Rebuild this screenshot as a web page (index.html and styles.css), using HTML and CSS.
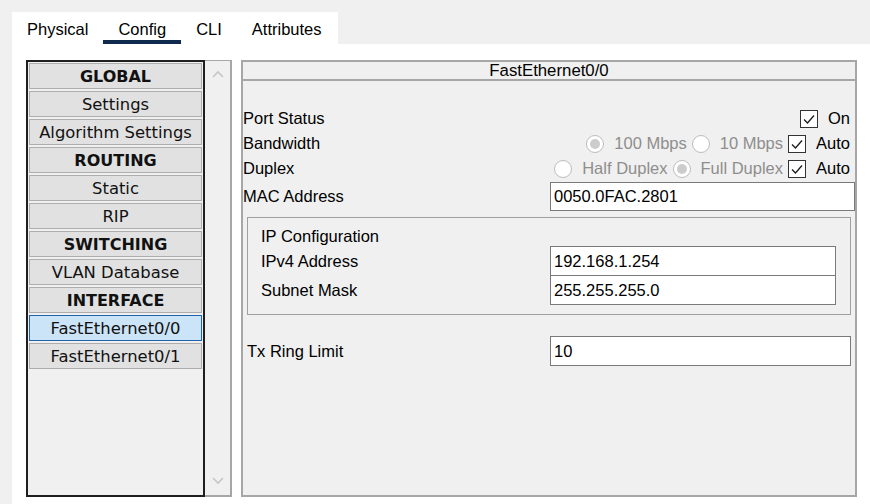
FILE: index.html
```html
<!DOCTYPE html>
<html>
<head>
<meta charset="utf-8">
<link rel="stylesheet" href="styles.css">
</head>
<body>
<div class="app">
  <div class="tabs">
    <div class="tab">Physical</div>
    <div class="tab active">Config</div>
    <div class="tab">CLI</div>
    <div class="tab">Attributes</div>
  </div>
  <div class="content">
    <div class="nav">
      <div class="list">
        <div class="item head">GLOBAL</div>
        <div class="item">Settings</div>
        <div class="item">Algorithm Settings</div>
        <div class="item head">ROUTING</div>
        <div class="item">Static</div>
        <div class="item">RIP</div>
        <div class="item head">SWITCHING</div>
        <div class="item">VLAN Database</div>
        <div class="item head">INTERFACE</div>
        <div class="item selected">FastEthernet0/0</div>
        <div class="item">FastEthernet0/1</div>
      </div>
      <div class="scrollbar">
        <svg width="12" height="8" viewBox="0 0 12 8"><path d="M1 7 L6 2 L11 7" stroke="#c6c6c6" stroke-width="1.6" fill="none"/></svg>
        <svg width="12" height="8" viewBox="0 0 12 8"><path d="M1 1 L6 6 L11 1" stroke="#c6c6c6" stroke-width="1.6" fill="none"/></svg>
      </div>
    </div>
    <div class="panel">
      <div class="panel-title">FastEthernet0/0</div>
      <div class="panel-body">
        <div class="row">
          <span class="label">Port Status</span>
          <div class="controls">
            <span class="opt"><span class="check"><svg width="16" height="16" viewBox="0 0 16 16"><path d="M3 8.5 L6.5 12 L13 4.5" stroke="#1a1a1a" stroke-width="1.3" fill="none"/></svg></span><span>On</span></span>
          </div>
        </div>
        <div class="row">
          <span class="label">Bandwidth</span>
          <div class="controls">
            <span class="opt dis"><span class="radio on"></span><span>100 Mbps</span></span>
            <span class="opt dis"><span class="radio"></span><span>10 Mbps</span></span>
            <span class="opt"><span class="check"><svg width="16" height="16" viewBox="0 0 16 16"><path d="M3 8.5 L6.5 12 L13 4.5" stroke="#1a1a1a" stroke-width="1.3" fill="none"/></svg></span><span>Auto</span></span>
          </div>
        </div>
        <div class="row">
          <span class="label">Duplex</span>
          <div class="controls">
            <span class="opt dis"><span class="radio"></span><span>Half Duplex</span></span>
            <span class="opt dis"><span class="radio on"></span><span>Full Duplex</span></span>
            <span class="opt"><span class="check"><svg width="16" height="16" viewBox="0 0 16 16"><path d="M3 8.5 L6.5 12 L13 4.5" stroke="#1a1a1a" stroke-width="1.3" fill="none"/></svg></span><span>Auto</span></span>
          </div>
        </div>
        <div class="row mac">
          <span class="label">MAC Address</span>
          <div class="field">0050.0FAC.2801</div>
        </div>
        <div class="group">
          <div class="group-title">IP Configuration</div>
          <div class="grow">
            <span class="glabel">IPv4 Address</span>
            <div class="field">192.168.1.254</div>
          </div>
          <div class="grow second">
            <span class="glabel">Subnet Mask</span>
            <div class="field">255.255.255.0</div>
          </div>
        </div>
        <div class="row tx">
          <span class="txlabel">Tx Ring Limit</span>
          <div class="field">10</div>
        </div>
      </div>
    </div>
  </div>
</div>
</body>
</html>
```
FILE: styles.css
```css
body {
  margin: 0;
  background: #f0f0f0;
  font-family: "Liberation Sans", Arial, sans-serif;
  font-size: 16.5px;
  color: #000;
}
.app {
  height: 504px;
  box-sizing: border-box;
  padding: 12px 0 0 12px;
  display: flex;
  flex-direction: column;
}
.tabs {
  display: flex;
  width: 326px;
  height: 32px;
  background: #fff;
}
.tab {
  padding: 6px 15px 0;
  border-bottom: 4px solid transparent;
  display: flex;
  align-items: center;
  font-size: 16.5px;
}
.tab.active {
  border-bottom-color: #0f2a4d;
}
.content {
  flex: 1;
  background: #fff;
  display: flex;
  gap: 9px;
  padding: 16px 13px 7px 14px;
}
.nav {
  display: flex;
}
.list {
  width: 179px;
  box-sizing: border-box;
  border: 2px solid #1f1f1f;
  padding: 1px;
  background: #f0f0f0;
  display: flex;
  flex-direction: column;
  gap: 2px;
}
.item {
  height: 26px;
  box-sizing: border-box;
  border: 1px solid #adadad;
  background: #e1e1e1;
  font-family: "DejaVu Sans", Verdana, sans-serif;
  font-size: 16.4px;
  display: flex;
  align-items: center;
  justify-content: center;
  color: #111;
  white-space: nowrap;
}
.item.head {
  font-weight: bold;
  font-size: 16px;
}
.item.selected {
  background: #cce4f7;
  border-color: #1e64a8;
}
.scrollbar {
  width: 27px;
  box-sizing: border-box;
  background: #f0f0f0;
  border-top: 1px solid #a6a6a6;
  border-right: 2px solid #a6a6a6;
  border-bottom: 2px solid #a6a6a6;
  display: flex;
  flex-direction: column;
  justify-content: space-between;
  align-items: center;
  padding: 9px 0 10px;
}
.panel {
  width: 616px;
  box-sizing: border-box;
  border: 2px solid #a6a6a6;
  background: #f0f0f0;
  display: flex;
  flex-direction: column;
}
.panel-title {
  height: 17px;
  line-height: 18px;
  text-align: center;
  border-bottom: 2px solid #a6a6a6;
  font-size: 16.8px;
}
.panel-body {
  padding-top: 25px;
  display: flex;
  flex-direction: column;
}
.row {
  display: flex;
  align-items: center;
  height: 25px;
}
.label {
  width: 307px;
  flex: none;
}
.controls {
  margin-left: auto;
  margin-right: 5px;
  display: flex;
  align-items: center;
  gap: 5px;
}
.opt {
  display: flex;
  align-items: center;
  gap: 10px;
}
.opt.dis {
  color: #8e8e8e;
}
.check {
  width: 18px;
  height: 18px;
  box-sizing: border-box;
  border: 1px solid #333;
  background: #fff;
  display: flex;
  align-items: center;
  justify-content: center;
}
.radio {
  width: 18px;
  height: 18px;
  box-sizing: border-box;
  border-radius: 50%;
  border: 1px solid #bdbdbd;
  background: #fff;
  display: flex;
  align-items: center;
  justify-content: center;
}
.radio.on::after {
  content: "";
  width: 10px;
  height: 10px;
  border-radius: 50%;
  background: #cccccc;
}
.field {
  flex: 1;
  height: 100%;
  box-sizing: border-box;
  background: #fff;
  border: 1px solid #7a7a7a;
  padding-left: 3px;
  display: flex;
  align-items: center;
}
.row.mac {
  margin-top: 1px;
  height: 29px;
}
.group {
  margin: 6px 4px 0;
  border: 1px solid #a0a0a0;
  padding: 0 14px 9px 13px;
  display: flex;
  flex-direction: column;
}
.group-title {
  height: 28px;
  display: flex;
  align-items: flex-end;
  box-sizing: border-box;
}
.grow {
  display: flex;
  align-items: center;
  height: 30px;
}
.grow.second {
  margin-top: -1px;
}
.glabel {
  width: 289px;
  flex: none;
}
.row.tx {
  margin: 21px 4px 0;
  height: 30px;
}
.txlabel {
  width: 303px;
  flex: none;
}
```
